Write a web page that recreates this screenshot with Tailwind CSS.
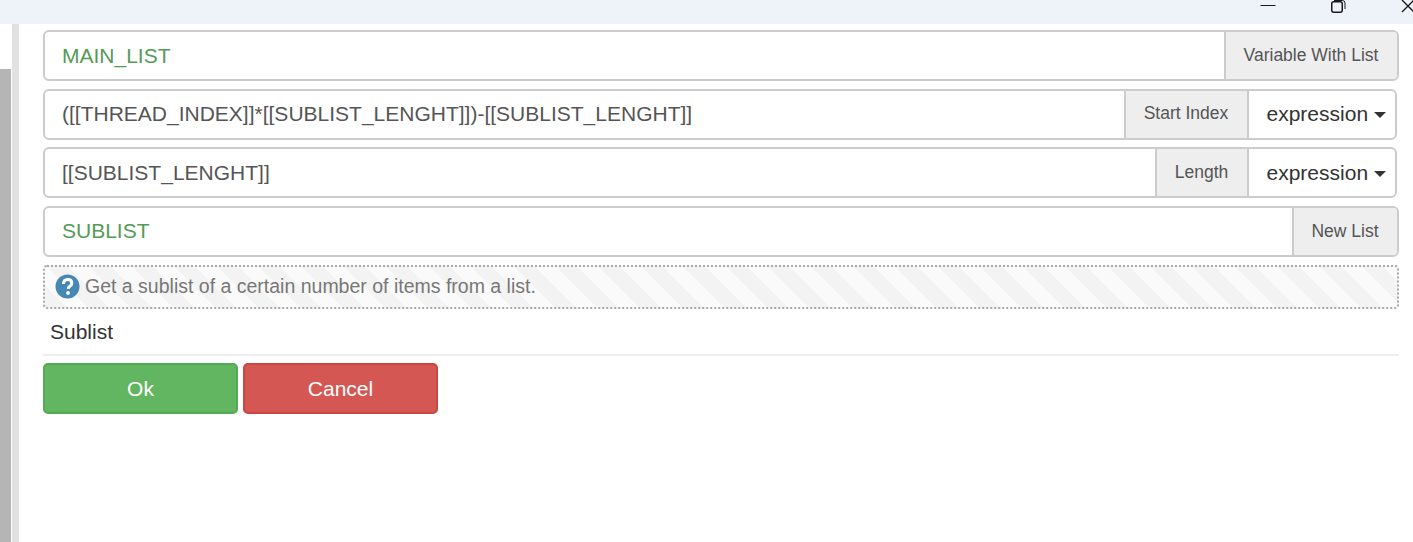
<!DOCTYPE html>
<html>
<head>
<meta charset="utf-8">
<script src="https://cdn.jsdelivr.net/npm/@tailwindcss/browser@4"></script>
</head>
<body class="bg-white overflow-hidden font-['Liberation_Sans',Arial,sans-serif]">
<div class="w-[1413px] h-[542px] flex flex-col overflow-hidden">
  <div class="h-[24px] shrink-0 bg-[#eef3fa] flex items-start justify-end overflow-hidden">
    <svg class="mr-[55px]" width="16" height="12" viewBox="0 0 16 12"><path d="M0.5 5.5H15.5" stroke="#1a1a1a" stroke-width="1"/></svg>
    <svg class="mr-[55px]" width="15" height="13" viewBox="0 0 15 13" fill="none"><rect x="0.75" y="1.75" width="10.500" height="10.500" rx="2" stroke="#1a1a1a" stroke-width="1.500"/><path d="M3 0.500H11.500Q14 0.500 14 3V9" stroke="#1a1a1a" stroke-width="1"/></svg>
    <svg class="mr-[-1px]" width="13" height="13" viewBox="0 0 13 13" fill="none"><path d="M1 0L13 12M13 0L1 12" stroke="#1a1a1a" stroke-width="1.400"/></svg>
  </div>
  <div class="flex-1 flex min-h-0">
    <div class="w-[12px] shrink-0 flex flex-col">
      <div class="h-[45px] bg-white"></div>
      <div class="flex-1 w-[11px] bg-[#b5b5b5]"></div>
    </div>
    <div class="w-[7px] shrink-0 bg-[#e1e1e1]"></div>
    <div class="flex-1 pl-[24px] pr-[14.500px] pt-[6px] flex flex-col text-[21px]">
      <div class="flex flex-col gap-[7.500px]">
        <div class="flex h-[51px] border-2 border-[#ccc] rounded-[6px] overflow-hidden">
          <div class="flex-1 flex items-center pl-[17px] text-[#559a56]">MAIN_LIST</div>
          <div class="w-[173px] shrink-0 border-l-2 border-[#ccc] bg-[#eee] text-[#555] text-[17.500px] flex items-center justify-center">Variable With List</div>
        </div>
        <div class="flex h-[51px] mr-[2px] border-2 border-[#ccc] rounded-[6px] overflow-hidden">
          <div class="flex-1 flex items-center pl-[17px] text-[#555]">([[THREAD_INDEX]]*[[SUBLIST_LENGHT]])-[[SUBLIST_LENGHT]]</div>
          <div class="w-[125px] shrink-0 border-x-2 border-[#ccc] bg-[#eee] text-[#555] text-[17.500px] flex items-center justify-center pb-[1px]">Start Index</div>
          <div class="w-[146px] shrink-0 flex items-center pl-[18px] text-[#333]">expression<span class="ml-[6px] mt-[2px] w-0 h-0 border-x-[6px] border-x-transparent border-t-[6px] border-t-[#333]"></span></div>
        </div>
        <div class="flex h-[51px] mr-[2px] border-2 border-[#ccc] rounded-[6px] overflow-hidden">
          <div class="flex-1 flex items-center pl-[17px] text-[#555]">[[SUBLIST_LENGHT]]</div>
          <div class="w-[94px] shrink-0 border-x-2 border-[#ccc] bg-[#eee] text-[#555] text-[17.500px] flex items-center justify-center">Length</div>
          <div class="w-[146px] shrink-0 flex items-center pl-[18px] text-[#333]">expression<span class="ml-[6px] mt-[2px] w-0 h-0 border-x-[6px] border-x-transparent border-t-[6px] border-t-[#333]"></span></div>
        </div>
        <div class="flex h-[51px] border-2 border-[#ccc] rounded-[6px] overflow-hidden">
          <div class="flex-1 flex items-center pl-[17px] text-[#559a56]">SUBLIST</div>
          <div class="w-[105px] shrink-0 border-l-2 border-[#ccc] bg-[#eee] text-[#555] text-[17.500px] flex items-center justify-center">New List</div>
        </div>
      </div>
      <div class="mt-[8px] h-[44px] flex items-center pl-[10px] gap-[5px] border-2 border-dotted border-[#aaa] rounded-[4px] bg-[repeating-linear-gradient(45deg,#f3f3f3,#f3f3f3_15px,#fafafa_15px,#fafafa_30px)] text-[19.500px] text-[#777]">
        <svg width="25" height="25" viewBox="0 0 25 25"><circle cx="12.500" cy="12.500" r="12" fill="#4787b3"/><path d="M8.500 10Q8.500 5.500 12.700 5.500Q16.800 5.500 16.800 9Q16.800 11 14.800 12.300Q13.200 13.300 13.200 15" fill="none" stroke="#fff" stroke-width="3"/><circle cx="13" cy="19" r="1.900" fill="#fff"/></svg>
        <span>Get a sublist of a certain number of items from a list.</span>
      </div>
      <div class="mt-[10px] pl-[7px] pb-[9px] text-[21px] leading-[26px] text-[#333] border-b-2 border-[#eee]">Sublist</div>
      <div class="mt-[7px] flex gap-[5px] text-[21px] text-white">
        <div class="w-[195px] h-[51px] flex items-center justify-center rounded-[5px] bg-[#62b662] border-2 border-[#55a955] pt-[1px]">Ok</div>
        <div class="w-[195px] h-[51px] flex items-center justify-center rounded-[5px] bg-[#d45753] border-2 border-[#cc4540] pt-[1px]">Cancel</div>
      </div>
    </div>
  </div>
</div>
</body>
</html>
